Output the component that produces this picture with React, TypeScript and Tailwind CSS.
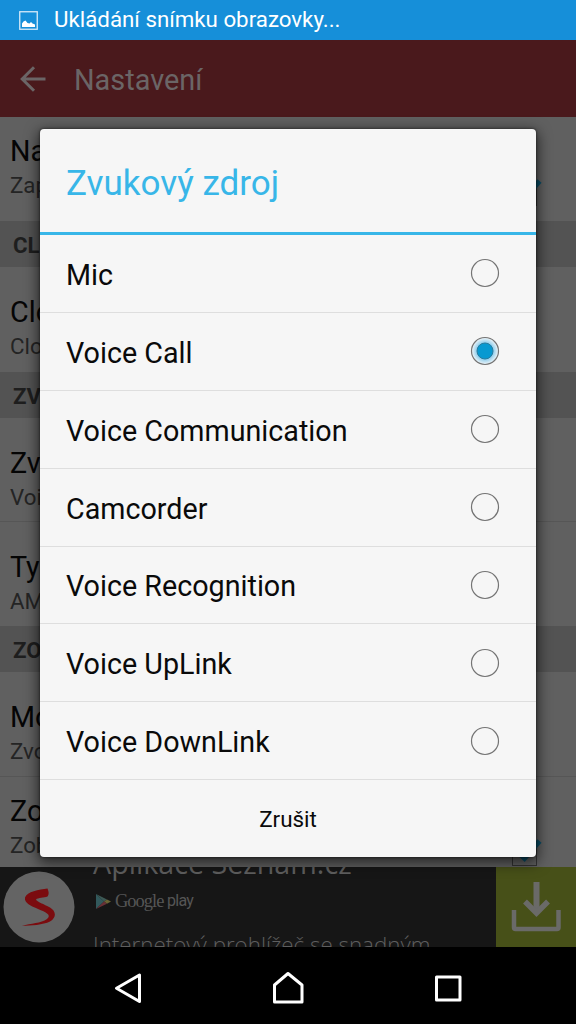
import { useState } from "react";
import clsx from "clsx";

const sources = [
  "Mic",
  "Voice Call",
  "Voice Communication",
  "Camcorder",
  "Voice Recognition",
  "Voice UpLink",
  "Voice DownLink",
];

const StatusBar = () => (
  <div className="h-10 bg-[#168fd9] flex items-center pl-[19px]">
    <svg width="19" height="19" viewBox="0 0 19 19" fill="none">
      <rect x="0.75" y="0.75" width="17.5" height="17.5" stroke="#d5ebf9" strokeWidth="1.3" />
      <path d="M3 16V12.500L4.500 10.500L6.500 9.500L8.500 12L10.500 12.500L12 11L13.500 12.500L16 13.500V16Z" fill="#fff" />
    </svg>
    <span className="ml-4 pb-0.5 text-[22.3px] leading-[38px] text-white">Ukládání snímku obrazovky...</span>
  </div>
);

const Toolbar = () => (
  <div className="h-[77px] bg-[#4a191c] flex items-center pl-5 text-[#6b6566]">
    <svg width="26" height="26" viewBox="0 0 26 26" fill="none" stroke="currentColor" strokeWidth="3">
      <path d="M25.5 13H2.5M14 1.2L2.2 13L14 24.8" />
    </svg>
    <span className="ml-[28px] text-[28.9px] leading-9 pt-0.5">Nastavení</span>
  </div>
);

const Checkbox = () => (
  <svg className="mr-[34px]" width="34" height="34" viewBox="0 0 34 34" fill="none">
    <rect x="4.5" y="8.5" width="24" height="24" stroke="#333" />
    <path d="M10 19L16.500 25L31.500 8" stroke="#0b4f68" strokeWidth="5.500" />
  </svg>
);

const Section = ({ title }: { title: string }) => (
  <div className="h-[46px] bg-[#535353] pl-[13px] text-[22.3px] leading-[48px] font-bold text-[#1e1e1e]">
    {title}
  </div>
);

interface PreferenceProps {
  title: string;
  summary: string;
  className: string;
  checked?: boolean;
}

const Preference = ({ title, summary, className, checked }: PreferenceProps) => (
  <div className={clsx("flex justify-between pl-[10px]", className)}>
    <div>
      <div className="text-[28.7px] leading-[34px] text-[#050505]">{title}</div>
      <div className="text-[22.3px] leading-[34px] text-[#242424]">{summary}</div>
    </div>
    {checked && (
      <div className="pt-[39px]">
        <Checkbox />
      </div>
    )}
  </div>
);

const AdBanner = () => (
  <div className="h-20 bg-[#161616] flex overflow-hidden">
    <svg className="ml-[3px] mt-[4px] shrink-0" width="72" height="72" viewBox="0 0 72 72">
      <circle cx="36" cy="36" r="35.5" fill="#646464" />
      <path
        d="M44.500 17.500C36 18.500 24 20.500 22 26.500C21 32 28 35 35 38C43 41 49 44 44 48C38 52.500 28 52 19 55C28 54.500 40 54 47 50.500C54 46.500 53 40 47 36.500C41 33 34 31 33 28.500C35 26.500 41 27 44.500 25.500C46.500 23 45.500 20 44.500 17.500Z"
        fill="#7b0c0f"
      />
    </svg>
    <div className="ml-[18px] flex-1 font-['Open_Sans','Noto_Sans',sans-serif] text-[#5e5e5e] whitespace-nowrap">
      <div className="h-[22px] -mt-5 text-[28.7px] leading-[32px]">Aplikace Seznam.cz</div>
      <div className="mt-[22px] flex items-center h-5 text-[#555]">
        <svg className="ml-[3px]" width="15" height="17" viewBox="0 0 15 17">
          <path d="M0 1V16L8 8.500Z" fill="#32595c" />
          <path d="M0 1L11 6.500L8 8.500Z" fill="#3d5955" />
          <path d="M11 6.500L15 8.500L11 10.700L8 8.500Z" fill="#6a6434" />
          <path d="M0 16L11 10.700L8 8.500Z" fill="#683036" />
        </svg>
        <span className="ml-1 w-12 font-['Liberation_Serif',serif] text-[18.5px] leading-5 tracking-[-1px]">Google</span>
        <span className="ml-1 font-[Roboto,sans-serif] text-[16px] leading-5 tracking-[-0.7px]">play</span>
      </div>
      <div className="mt-[20px] text-[22.35px] leading-[28px] font-light">Internetový prohlížeč se snadným</div>
    </div>
    <div className="w-20 h-20 bg-[#475018] shrink-0 flex justify-center pt-[14px]">
      <svg width="50" height="52" viewBox="0 0 50 52" fill="none" stroke="#6a6a68">
        <path d="M25.500 1V31" strokeWidth="6" />
        <path d="M14 20.500L25.500 32L37 20.500" strokeWidth="5.500" />
        <path d="M3 29V46.500Q3 48 4.500 48H46Q47.500 48 47.500 46.500V29" strokeWidth="4.500" />
      </svg>
    </div>
  </div>
);

const NavBar = () => (
  <div className="h-[77px] bg-black">
    <svg width="576" height="77" viewBox="0 0 576 77" fill="none" stroke="#fff" strokeWidth="3" strokeLinejoin="round">
      <path d="M139.500 28V54.500L116.500 41.200Z" />
      <path d="M274.500 55V38L288 26.500L302 38V55Z" />
      <rect x="436.500" y="30" width="23.500" height="23" />
    </svg>
  </div>
);

const Radio = ({ selected }: { selected: boolean }) => (
  <svg width="30" height="30" viewBox="0 0 30 30">
    <defs>
      <radialGradient id="glow">
        <stop offset="0.6" stopColor="#8fcdec" />
        <stop offset="1" stopColor="#f2f6f8" />
      </radialGradient>
    </defs>
    <circle cx="15" cy="15" r="13.5" fill={selected ? "url(#glow)" : "#f6f6f6"} stroke="#747474" strokeWidth="1.2" />
    {selected && <circle cx="15" cy="15" r="8" fill="#0799d1" stroke="#287c9e" strokeWidth="1" />}
  </svg>
);

export default function App() {
  const [source, setSource] = useState("Voice Call");

  return (
    <div className="relative w-[576px] h-[1024px] overflow-hidden bg-[#606060] font-[Roboto,sans-serif]">
      <StatusBar />
      <Toolbar />
      <Preference title="Na" summary="Zap" className="h-[104px] pt-[17px]" checked />
      <Section title="CL" />
      <Preference title="Clo" summary="Clo" className="h-[105px] pt-[28px]" />
      <Section title="ZV" />
      <Preference title="Zv" summary="Voi" className="h-[104px] pt-[28px] border-b border-[#565656]" />
      <Preference title="Ty" summary="AM" className="h-[104px] pt-[28px]" />
      <Section title="ZO" />
      <Preference title="Mo" summary="Zvo" className="h-[105px] pt-[28px] border-b border-[#565656]" />
      <Preference title="Zo" summary="Zob" className="h-[90px] pt-[17px]" checked />
      <AdBanner />
      <NavBar />

      {/* Audio source dialog */}
      <div className="absolute left-10 top-[129px] w-[496px] h-[728px] bg-[#f6f6f6] rounded-[4px] shadow-[0_4px_14px_2px_rgba(0,0,0,0.6),0_0_2px_1px_rgba(0,0,0,0.3)]">
        <h1 className="h-[106px] border-b-[3px] border-[#38b6e8] pl-[26px] pt-px text-[35px] leading-[107px] text-[#38b6e8]">
          Zvukový zdroj
        </h1>
        {sources.map((name) => (
          <button
            key={name}
            onClick={() => setSource(name)}
            className="w-full h-[77.9px] border-b border-[#dedede] pl-[26px] pr-[36px] flex items-center justify-between text-[28.7px] text-[#0a0a0a]"
          >
            <span className="pt-[4px]">{name}</span>
            <Radio selected={name === source} />
          </button>
        ))}
        <button className="w-full h-[77px] pt-[2px] text-[22.4px] text-[#0a0a0a]">Zrušit</button>
      </div>
    </div>
  );
}
